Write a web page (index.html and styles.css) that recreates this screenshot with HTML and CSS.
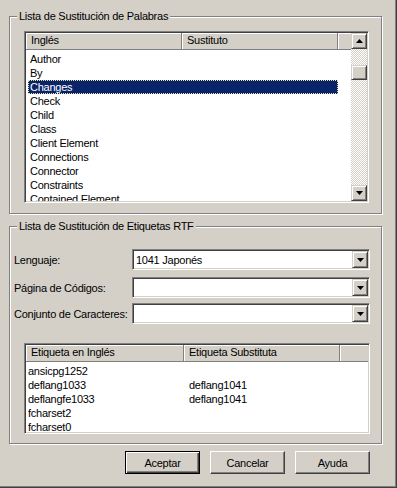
FILE: index.html
```html
<!DOCTYPE html>
<html lang="es">
<head>
    <meta charset="UTF-8">
    <title>Sustitución de Palabras</title>
    <link rel="stylesheet" href="styles.css">
</head>
<body>

    <div class="dialog">
        <fieldset class="group group-words">
            <legend>Lista de Sustitución de Palabras</legend>
            <div class="group-body words-body">
                <div class="listview words-list">
                    <div class="lv-main">
                        <div class="lv-header">
                            <div class="hcol c1">Inglés</div>
                            <div class="hcol c2">Sustituto</div>
                            <div class="hcol filler"></div>
                        </div>
                        <div class="lv-rows">
                            <div class="row"><span class="c1">Author</span><span class="c2"></span></div>
                            <div class="row"><span class="c1">By</span><span class="c2"></span></div>
                            <div class="row selected"><span class="c1">Changes</span><span class="c2"></span></div>
                            <div class="row"><span class="c1">Check</span><span class="c2"></span></div>
                            <div class="row"><span class="c1">Child</span><span class="c2"></span></div>
                            <div class="row"><span class="c1">Class</span><span class="c2"></span></div>
                            <div class="row"><span class="c1">Client Element</span><span class="c2"></span></div>
                            <div class="row"><span class="c1">Connections</span><span class="c2"></span></div>
                            <div class="row"><span class="c1">Connector</span><span class="c2"></span></div>
                            <div class="row"><span class="c1">Constraints</span><span class="c2"></span></div>
                            <div class="row"><span class="c1">Contained Element</span><span class="c2"></span></div>
                        </div>
                    </div>
                    <div class="scrollbar">
                        <div class="sb-btn">
                            <svg width="7" height="4" viewBox="0 0 7 4"><polygon points="3.5,0 7,4 0,4" fill="#000"/></svg>
                        </div>
                        <div class="sb-track">
                            <div class="sb-thumb"></div>
                        </div>
                        <div class="sb-btn">
                            <svg width="7" height="4" viewBox="0 0 7 4"><polygon points="0,0 7,0 3.5,4" fill="#000"/></svg>
                        </div>
                    </div>
                </div>
            </div>
        </fieldset>

        <fieldset class="group group-tags">
            <legend>Lista de Sustitución de Etiquetas RTF</legend>
            <div class="group-body tags-body">
                <div class="form-row row-lang">
                    <label class="field-label">Lenguaje:</label>
                    <div class="combo">
                        <span class="combo-text">1041 Japonés</span>
                        <div class="combo-btn">
                            <svg width="7" height="4" viewBox="0 0 7 4"><polygon points="0,0 7,0 3.5,4" fill="#000"/></svg>
                        </div>
                    </div>
                </div>
                <div class="form-row row-code">
                    <label class="field-label">Página de Códigos:</label>
                    <div class="combo">
                        <span class="combo-text"></span>
                        <div class="combo-btn">
                            <svg width="7" height="4" viewBox="0 0 7 4"><polygon points="0,0 7,0 3.5,4" fill="#000"/></svg>
                        </div>
                    </div>
                </div>
                <div class="form-row row-charset">
                    <label class="field-label">Conjunto de Caracteres:</label>
                    <div class="combo">
                        <span class="combo-text"></span>
                        <div class="combo-btn">
                            <svg width="7" height="4" viewBox="0 0 7 4"><polygon points="0,0 7,0 3.5,4" fill="#000"/></svg>
                        </div>
                    </div>
                </div>

                <div class="listview tags-list">
                    <div class="lv-main">
                        <div class="lv-header">
                            <div class="hcol c1">Etiqueta en Inglés</div>
                            <div class="hcol c2">Etiqueta Substituta</div>
                            <div class="hcol filler"></div>
                        </div>
                        <div class="lv-rows">
                            <div class="row"><span class="c1">ansicpg1252</span><span class="c2"></span></div>
                            <div class="row"><span class="c1">deflang1033</span><span class="c2">deflang1041</span></div>
                            <div class="row"><span class="c1">deflangfe1033</span><span class="c2">deflang1041</span></div>
                            <div class="row"><span class="c1">fcharset2</span><span class="c2"></span></div>
                            <div class="row"><span class="c1">fcharset0</span><span class="c2"></span></div>
                        </div>
                    </div>
                </div>
            </div>
        </fieldset>

        <div class="buttons">
            <button class="btn default">Aceptar</button>
            <button class="btn">Cancelar</button>
            <button class="btn">Ayuda</button>
        </div>
    </div>

</body>
</html>
```

FILE: styles.css
```css
body {
    margin: 0;
    padding: 0;
    background-color: #d4d0c8;
    font-family: "Liberation Sans", Arial, sans-serif;
    font-size: 11px;
    letter-spacing: -0.25px;
    color: #000;
}

.dialog {
    width: 397px;
    height: 488px;
    box-sizing: border-box;
    padding: 10px 27px 0 9px;
    background-color: #d4d0c8;
    box-shadow: inset -1px -1px #404040, inset -2px -2px #808080;
    overflow: hidden;
}

/* etched group boxes */
.group {
    margin: 0;
    padding: 0;
    width: 373px;
    box-sizing: border-box;
    border: 1px solid #808080;
    box-shadow: inset 1px 1px #fff, 1px 1px #fff;
    min-inline-size: 0;
}

.group legend {
    margin-left: 7px;
    padding: 0 2px;
    line-height: 13px;
    background-color: #d4d0c8;
}

.group-tags {
    margin-top: 6px;
}

.words-body {
    padding: 8px 0 10px 14px;
}

.tags-body {
    padding: 16px 0 9px 4px;
}

/* list views */
.listview {
    display: flex;
    background-color: #fff;
    border: 1px solid;
    border-color: #808080 #fff #fff #808080;
    box-shadow: inset 1px 1px #404040, inset -1px -1px #d4d0c8;
    padding: 1px;
    box-sizing: border-box;
    overflow: hidden;
}

.words-list {
    width: 345px;
    height: 172px;
}

.tags-list {
    width: 346px;
    height: 91px;
    margin-left: 10px;
    margin-top: 19px;
}

.lv-main {
    flex: 1;
    overflow: hidden;
}

.lv-header {
    display: flex;
    height: 17px;
}

.hcol {
    box-sizing: border-box;
    height: 17px;
    line-height: 15px;
    padding-left: 5px;
    background-color: #d4d0c8;
    border-right: 1px solid #808080;
    border-bottom: 1px solid #808080;
    box-shadow: inset 1px 1px #fff;
    white-space: nowrap;
}

.hcol.filler {
    flex: 1;
    border-right: none;
}

.words-list .hcol.c1 { width: 156px; }
.words-list .hcol.c2 { width: 156px; }
.tags-list .hcol.c1 { width: 158px; }
.tags-list .hcol.c2 { width: 156px; }

.lv-rows {
    padding-top: 2px;
}

.row {
    display: flex;
    height: 14px;
    line-height: 14px;
    white-space: nowrap;
    box-sizing: border-box;
}

.words-list .row {
    width: 310px;
    margin-left: 2px;
}

.words-list .row .c1 { width: 152px; padding-left: 2px; }
.words-list .row .c2 { padding-left: 4px; }

.tags-list .row .c1 { width: 156px; padding-left: 2px; }
.tags-list .row .c2 { padding-left: 5px; }

.row.selected {
    background-color: #0a246a;
    color: #fff;
    outline: 1px dotted #f0e0a0;
    outline-offset: -1px;
}

/* scrollbar */
.scrollbar {
    width: 16px;
    display: flex;
    flex-direction: column;
}

.sb-btn,
.sb-thumb,
.combo-btn {
    box-sizing: border-box;
    background-color: #d4d0c8;
    border: 1px solid;
    border-color: #d4d0c8 #404040 #404040 #d4d0c8;
    box-shadow: inset 1px 1px #fff, inset -1px -1px #808080;
}

.sb-btn {
    height: 16px;
    display: flex;
    align-items: center;
    justify-content: center;
}

.sb-track {
    flex: 1;
    background: repeating-conic-gradient(#d4d0c8 0 25%, #fff 0 50%) 0 0 / 2px 2px;
}

.sb-thumb {
    margin-top: 16px;
    height: 15px;
}

/* combo boxes */
.form-row {
    display: flex;
    align-items: center;
    height: 21px;
}

.row-code {
    margin-top: 7px;
}

.row-charset {
    margin-top: 5px;
}

.field-label {
    width: 118px;
    white-space: nowrap;
}

.combo {
    width: 238px;
    height: 21px;
    box-sizing: border-box;
    display: flex;
    align-items: center;
    background-color: #fff;
    border: 1px solid;
    border-color: #808080 #fff #fff #808080;
    box-shadow: inset 1px 1px #404040, inset -1px -1px #d4d0c8;
    padding: 1px;
}

.combo-text {
    flex: 1;
    padding-left: 2px;
}

.combo-btn {
    width: 16px;
    height: 17px;
    display: flex;
    align-items: center;
    justify-content: center;
}

/* dialog buttons */
.buttons {
    display: flex;
    justify-content: flex-end;
    gap: 10px;
    margin-top: 7px;
}

.btn {
    width: 75px;
    height: 23px;
    box-sizing: border-box;
    padding: 0;
    font-family: inherit;
    font-size: 11px;
    letter-spacing: -0.25px;
    color: #000;
    background-color: #d4d0c8;
    border: 1px solid;
    border-color: #fff #404040 #404040 #fff;
    box-shadow: inset -1px -1px #808080;
}

.btn.default {
    border-color: #000;
    box-shadow: inset 1px 1px #fff, inset -1px -1px #404040, inset -2px -2px #808080;
}
```
